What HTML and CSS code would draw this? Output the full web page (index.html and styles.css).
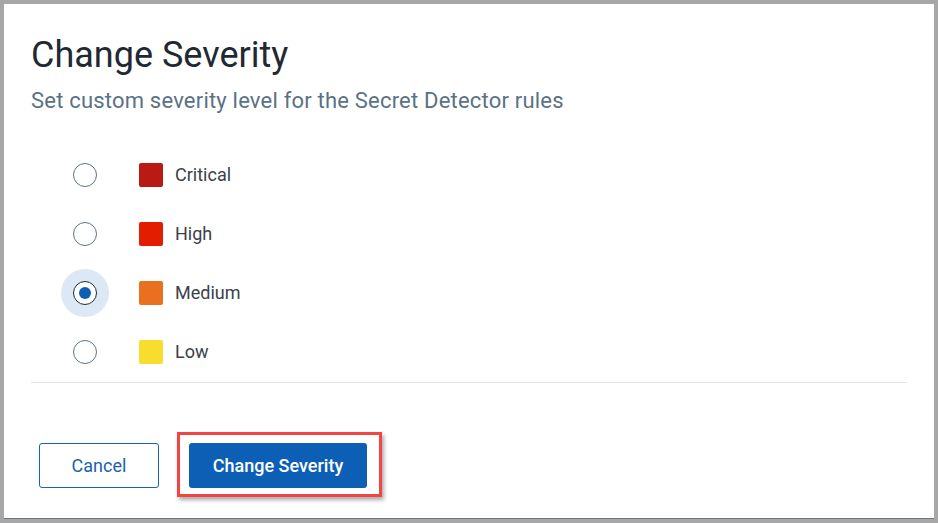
FILE: index.html
```html
<!DOCTYPE html>
<html>

<head>
    <meta charset="utf-8">
    <title>Change Severity</title>
    <link rel="stylesheet" href="styles.css">
</head>

<body>
    <div id="dialog">
        <h1 id="title">Change Severity</h1>
        <p id="subtitle">Set custom severity level for the Secret Detector rules</p>

        <div id="levels">
            <label class="level">
                <span class="radio"></span>
                <span class="swatch critical"></span>
                <span class="level-name">Critical</span>
            </label>
            <label class="level">
                <span class="radio"></span>
                <span class="swatch high"></span>
                <span class="level-name">High</span>
            </label>
            <label class="level selected">
                <span class="radio"></span>
                <span class="swatch medium"></span>
                <span class="level-name">Medium</span>
            </label>
            <label class="level">
                <span class="radio"></span>
                <span class="swatch low"></span>
                <span class="level-name">Low</span>
            </label>
        </div>

        <div id="actions">
            <button class="btn btn-outline">Cancel</button>
            <div class="highlight-wrap">
                <button class="btn btn-primary">Change Severity</button>
                <div class="highlight"></div>
            </div>
        </div>
    </div>
</body>

</html>
```

FILE: styles.css
```css
* {
    box-sizing: border-box;
}

html,
body {
    margin: 0;
    height: 100%;
}

body {
    background-color: #a7a7a7;
    padding: 4px 4px 4px 4px;
    font-family: Roboto, "Liberation Sans", sans-serif;
}

#dialog {
    background-color: #ffffff;
    height: 515px;
    border-bottom: 1px solid #5e7a8a;
    padding: 0 27px;
}

#title {
    margin: 0;
    padding-top: 28px;
    font-size: 36px;
    font-weight: 400;
    line-height: 46px;
    color: #1f2933;
}

#subtitle {
    margin: 0;
    margin-top: 9px;
    font-size: 22px;
    line-height: 28px;
    letter-spacing: 0.2px;
    color: #5a7284;
}

#levels {
    margin-top: 30px;
    padding-bottom: 1px;
    border-bottom: 1px solid #e4e8ea;
}

.level {
    display: flex;
    align-items: center;
    height: 59px;
}

.radio {
    position: relative;
    width: 24px;
    height: 24px;
    margin-left: 42px;
    margin-right: 42px;
    border: 1px solid #5b7285;
    border-radius: 50%;
    flex-shrink: 0;
}

.selected .radio {
    background-color: #ffffff;
    border-color: #1f2933;
    box-shadow: 0 0 0 12px #dce8f4;
}

.selected .radio::after {
    content: '';
    position: absolute;
    left: 50%;
    top: 50%;
    width: 12px;
    height: 12px;
    transform: translate(-50%, -50%);
    border-radius: 50%;
    background-color: #0c5fb5;
}

.swatch {
    width: 24px;
    height: 24px;
    border-radius: 2px;
    margin-right: 12px;
    flex-shrink: 0;
}

.critical {
    background-color: #b91b14;
}

.high {
    background-color: #e31e00;
}

.medium {
    background-color: #e8701e;
}

.low {
    background-color: #f8dc2e;
}

.level-name {
    font-size: 18px;
    color: #3a4148;
}

#actions {
    display: flex;
    gap: 30px;
    margin-top: 60px;
    padding-left: 8px;
}

.btn {
    height: 45px;
    border-radius: 3px;
    font-family: Roboto, "Liberation Sans", sans-serif;
    font-size: 18px;
    cursor: pointer;
}

.btn-outline {
    width: 120px;
    background-color: #ffffff;
    border: 1px solid #1a62b3;
    color: #1a62b3;
}

.btn-primary {
    width: 178px;
    background-color: #0c5fb5;
    border: none;
    color: #ffffff;
    font-weight: 500;
}

.highlight-wrap {
    position: relative;
}

.highlight {
    position: absolute;
    left: -12px;
    top: -11px;
    width: 205px;
    height: 65px;
    border: 3px solid #f24444;
    box-shadow: 2px 3px 4px #00000055;
    pointer-events: none;
}
```
